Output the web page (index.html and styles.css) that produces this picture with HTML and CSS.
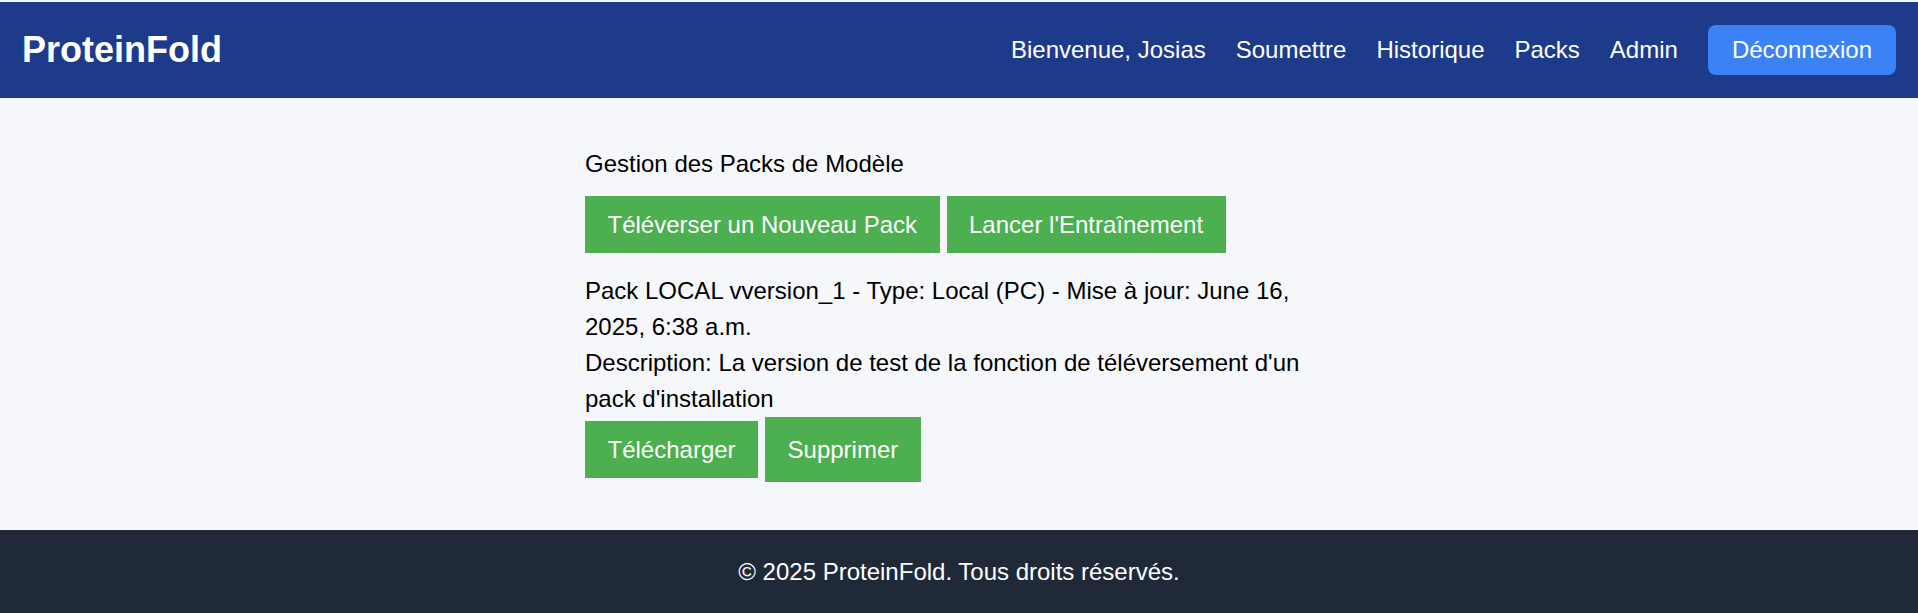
FILE: index.html
```html
<!DOCTYPE html>
<html lang="fr">
<head>
<meta charset="utf-8">
<title>ProteinFold - Packs</title>
<link rel="stylesheet" href="styles.css">
</head>
<body>
<header class="site-header">
  <div class="brand">ProteinFold</div>
  <nav class="nav">
    <span class="nav-link">Bienvenue, Josias</span>
    <a class="nav-link" href="#">Soumettre</a>
    <a class="nav-link" href="#">Historique</a>
    <a class="nav-link" href="#">Packs</a>
    <a class="nav-link" href="#">Admin</a>
    <a class="logout" href="#">Déconnexion</a>
  </nav>
</header>
<main class="content">
  <h2 class="title">Gestion des Packs de Modèle</h2>
  <div class="actions">
    <a class="btn" href="#">Téléverser un Nouveau Pack</a>
    <a class="btn" href="#">Lancer l'Entraînement</a>
  </div>
  <div class="pack">
    <p class="pack-text">Pack LOCAL vversion_1 - Type: Local (PC) - Mise à jour: June 16, 2025, 6:38 a.m.</p>
    <p class="pack-text">Description: La version de test de la fonction de téléversement d'un pack d'installation</p>
    <div class="pack-actions">
      <a class="btn" href="#">Télécharger</a>
      <button class="btn btn-delete" type="button">Supprimer</button>
    </div>
  </div>
</main>
<footer class="site-footer">© 2025 ProteinFold. Tous droits réservés.</footer>
</body>
</html>
```
FILE: styles.css
```css
html, body {
  margin: 0;
  padding: 0;
}
body {
  background: #f5f7fb;
  font-family: "Liberation Sans", Arial, sans-serif;
  color: #000;
  font-size: 24px;
  overflow: hidden;
}
.site-header {
  margin-top: 2px;
  height: 96px;
  background: #1e3a8a;
  display: flex;
  align-items: center;
  justify-content: space-between;
  padding: 0 22px;
}
.brand {
  color: #fff;
  font-weight: bold;
  font-size: 36px;
  line-height: 40px;
}
.nav {
  display: flex;
  align-items: center;
  gap: 30px;
}
.nav-link {
  color: #fff;
  text-decoration: none;
  font-size: 24px;
  line-height: 28px;
}
.logout {
  color: #fff;
  text-decoration: none;
  background: #3b82f6;
  border-radius: 8px;
  padding: 11px 24px;
  font-size: 24px;
  line-height: 28px;
}
.content {
  width: 748px;
  margin: 0 auto;
  padding: 48px 0;
}
.title {
  margin: 0 0 14px;
  font-size: 24px;
  font-weight: normal;
  line-height: 36px;
}
.actions {
  display: flex;
  gap: 7px;
  align-items: flex-start;
}
.btn {
  display: inline-block;
  background: #4caf50;
  color: #fff;
  text-decoration: none;
  font-family: "Liberation Sans", Arial, sans-serif;
  font-size: 24px;
  line-height: 28px;
  padding: 14.5px 22.5px;
  border: none;
  border-radius: 0;
}
.btn-delete {
  padding: 18.5px 22.5px;
  cursor: pointer;
}
.pack {
  margin-top: 20px;
}
.pack-text {
  margin: 0;
  line-height: 36px;
}
.pack-actions {
  display: flex;
  gap: 7px;
  align-items: center;
}
.site-footer {
  background: #1f2937;
  color: #fff;
  text-align: center;
  font-size: 24px;
  line-height: 36px;
  padding: 24px 0 23px;
}
```
